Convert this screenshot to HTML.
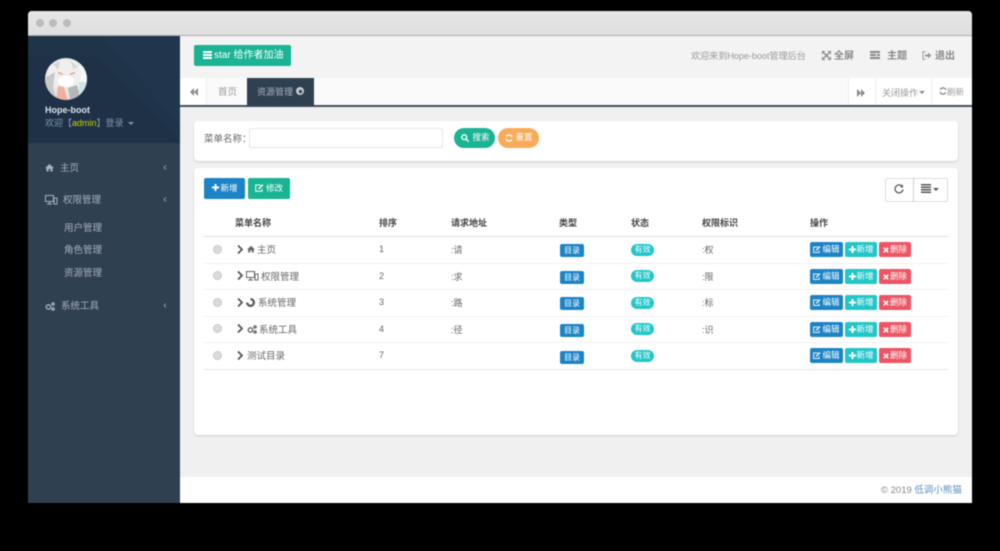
<!DOCTYPE html>
<html lang="zh"><head><meta charset="utf-8"><title>Hope-boot</title>
<style>
html,body{margin:0;padding:0;background:#000;width:1000px;height:551px;overflow:hidden}
body{font-family:"Liberation Sans","Noto Sans CJK SC",sans-serif;font-size:9px;color:#676a6c}
#w{position:absolute;left:0;top:0;width:1000px;height:551px;filter:blur(.45px)}
.a{position:absolute;white-space:nowrap}
.b{position:absolute;color:#fff;border-radius:2px;text-align:center;white-space:nowrap}
svg{position:absolute;overflow:visible}
.nav{color:#a7b1c2;font-size:9.5px;margin-top:1px}
.th{font-weight:bold;color:#444;font-size:9px;top:217px;line-height:13px}
.td{color:#666;font-size:9px;line-height:13px;margin-top:1px}
.n{color:#666;font-size:9px;line-height:13px}
.ln{position:absolute;left:204px;width:744px;height:1px;background:#eef0f1}
.rad{position:absolute;left:213px;width:9px;height:9px;border-radius:50%;background:#dcdcdc;border:1px solid #c8c8c8;box-sizing:border-box}
</style></head><body><div id="w">
<div class="a" style="left:28px;top:11px;width:944px;height:492px;background:#f0f0f0;border-radius:4px 4px 0 0;overflow:hidden">
<div class="a" style="left:0;top:0;width:944px;height:25px;background:linear-gradient(#e6e6e6,#dfdfdf);border-bottom:1px solid #a9adb0;box-sizing:border-box"></div>
<div class="a" style="left:8px;top:8px;width:8px;height:8px;border-radius:50%;background:#bcbcbc"></div>
<div class="a" style="left:21px;top:8px;width:8px;height:8px;border-radius:50%;background:#bcbcbc"></div>
<div class="a" style="left:35px;top:8px;width:8px;height:8px;border-radius:50%;background:#bcbcbc"></div>
</div>

<!-- sidebar -->
<div class="a" style="left:28px;top:36px;width:152px;height:467px;background:#2f4050"></div>
<div class="a" style="left:28px;top:36px;width:152px;height:107px;background:#1f3349"></div>
<svg style="left:28px;top:36px" width="152" height="107"><polygon points="75,0 152,0 152,90" fill="#233a50" opacity=".5"/><polygon points="0,20 70,20 152,107 0,107" fill="#1d3046" opacity=".4"/></svg>
<svg style="left:45px;top:58px" width="42" height="42" viewBox="0 0 42 42">
<defs><clipPath id="c"><circle cx="21" cy="21" r="21"/></clipPath></defs>
<g clip-path="url(#c)"><rect width="42" height="42" fill="#e4e8e8"/>
<rect x="28" y="8" width="14" height="24" fill="#f5f8f9"/>
<path d="M4 8 L14 2 L30 3 L37 14 L33 30 L10 30 L3 22Z" fill="#efefee"/>
<path d="M8 6L15 3L13 12ZM26 3L33 9L28 11Z" fill="#d6d6d6"/>
<path d="M0 20 L10 14 L8 30 L12 42 L0 42Z" fill="#c6c9c8"/>
<path d="M13 28 L19 29 L23 42 L11 42Z" fill="#f2b09c"/>
<path d="M23 30 L32 27 L36 42 L25 42Z" fill="#b2b7b8"/>
<rect x="34" y="24" width="8" height="18" fill="#d3e2e6"/>
<path d="M13 14.5 L18 16.5 M25 16.5 L30 14.5" stroke="#f2977c" stroke-width="1.3"/>
<ellipse cx="21" cy="23" rx="8" ry="5.5" fill="#fff"/></g></svg>
<div class="a" style="left:45px;top:104px;color:#dfe4ed;font-weight:bold;font-size:9px;line-height:13px">Hope-boot</div>
<div class="a" style="left:45px;top:117px;color:#8095a8;font-size:9px;line-height:13px">欢迎【<span style="color:#c8d400">admin</span>】登录 <span style="display:inline-block;border:3px solid transparent;border-top-color:#8095a8;border-bottom:0;vertical-align:middle;margin-left:2px"></span></div>

<svg style="left:45px;top:163px" width="9" height="9" viewBox="0 0 9 9"><path d="M4.5 1 L9 5 H7.6 V8.5 H5.4 V6 H3.6 V8.5 H1.4 V5 H0Z" fill="#a7b1c2"/></svg>
<div class="a nav" style="left:60px;top:161px;line-height:13px">主页</div>
<svg style="left:45px;top:195px" width="12" height="10" viewBox="0 0 12 10" fill="none" stroke="#a7b1c2"><rect x=".5" y=".5" width="8" height="6"/><path d="M2 9H7M4.5 7V9M10 3H12V9H9V3Z"/></svg>
<div class="a nav" style="left:63px;top:193px;line-height:13px">权限管理</div>
<div class="a nav" style="left:64px;top:221px;line-height:13px">用户管理</div>
<div class="a nav" style="left:64px;top:243px;line-height:13px">角色管理</div>
<div class="a nav" style="left:64px;top:266px;line-height:13px">资源管理</div>
<svg style="left:45px;top:302px" width="10" height="9" viewBox="0 0 10 9" fill="none" stroke="#a7b1c2" stroke-width="1.4"><circle cx="3.4" cy="5" r="2.2"/><circle cx="8" cy="2" r="1.1"/><circle cx="8" cy="7" r="1.1"/></svg>
<div class="a nav" style="left:61px;top:299px;line-height:13px">系统工具</div>
<svg style="left:163px;top:165px" width="4" height="5" fill="none" stroke="#8d99aa" stroke-width=".9"><path d="M3 .5L1 2.5L3 4.5"/></svg>
<svg style="left:163px;top:197px" width="4" height="5" fill="none" stroke="#8d99aa" stroke-width=".9"><path d="M3 .5L1 2.5L3 4.5"/></svg>
<svg style="left:163px;top:303px" width="4" height="5" fill="none" stroke="#8d99aa" stroke-width=".9"><path d="M3 .5L1 2.5L3 4.5"/></svg>

<!-- topbar -->
<div class="a" style="left:180px;top:36px;width:792px;height:42px;background:#f3f3f4"></div>
<div class="b" style="left:194px;top:45px;width:97px;height:21px;background:#1ab394;border-radius:2px"></div>
<svg style="left:203px;top:51px" width="9" height="8"><path d="M0 0H9V2H0ZM0 3H9V5H0ZM0 6H9V8H0Z" fill="#fff"/></svg>
<div class="a" style="left:214px;top:49px;color:#fff;font-size:10px;line-height:14px">star 给作者加油</div>
<div class="a" style="left:691px;top:50px;color:#999;font-size:9.2px;line-height:13px;letter-spacing:-.1px">欢迎来到Hope-boot管理后台</div>
<svg style="left:822px;top:51px" width="9" height="9" viewBox="0 0 9 9"><path d="M2 2L7 7M7 2L2 7" fill="none" stroke="#888" stroke-width="1.4"/><path d="M0 0H3.5L0 3.5ZM9 0V3.5L5.5 0ZM0 9V5.5L3.5 9ZM9 9H5.5L9 5.5Z" fill="#888"/></svg>
<div class="a" style="left:834px;top:50px;color:#888;font-weight:bold;font-size:10px;line-height:14px">全屏</div>
<svg style="left:870px;top:51px" width="10" height="8" viewBox="0 0 10 8"><path d="M0 0H10V2H0ZM0 3H6V5H0ZM7 3H10V5H7ZM0 6H10V8H0Z" fill="#888"/></svg>
<div class="a" style="left:887px;top:50px;color:#888;font-weight:bold;font-size:10px;line-height:14px">主题</div>
<svg style="left:922px;top:51px" width="10" height="9" viewBox="0 0 10 9" fill="none" stroke="#999"><path d="M3.5 .7H1V8.3H3.5"/><path d="M3 3.5H6V1.5L9.5 4.5L6 7.5V5.5H3Z" fill="#999" stroke="none"/></svg>
<div class="a" style="left:935px;top:50px;color:#888;font-weight:bold;font-size:10px;line-height:14px">退出</div>

<!-- tabs -->
<div class="a" style="left:180px;top:78px;width:792px;height:27px;background:#fafafa"></div>
<div class="a" style="left:180px;top:105px;width:792px;height:2px;background:#42505e"></div>
<div class="a" style="left:180px;top:78px;width:27px;height:27px;background:#fff;border-right:1px solid #eee;box-sizing:border-box"></div>
<svg style="left:190px;top:88px" width="8" height="8" viewBox="0 0 8 8"><path d="M4 0V8L0 4ZM8 0V8L4 4Z" fill="#8a8a8a"/></svg>
<div class="a" style="left:218px;top:86px;color:#999;font-size:9.5px;line-height:13px">首页</div>
<div class="a" style="left:247px;top:78px;width:67px;height:28px;background:#2f4050"></div>
<div class="a" style="left:257px;top:86px;color:#a7b1c2;font-size:9px;line-height:13px">资源管理</div>
<div class="a" style="left:296px;top:87px;width:8px;height:8px;border-radius:50%;background:#c3cad3"></div>
<div class="a" style="left:298.5px;top:89.5px;width:3px;height:3px;background:#2f4050"></div>
<div class="a" style="left:848px;top:78px;width:124px;height:27px;background:#fff"></div>
<div class="a" style="left:848px;top:78px;width:1px;height:27px;background:#eee"></div>
<div class="a" style="left:875px;top:78px;width:1px;height:27px;background:#eee"></div>
<div class="a" style="left:931px;top:78px;width:1px;height:27px;background:#eee"></div>
<svg style="left:857px;top:89px" width="8" height="8" viewBox="0 0 8 8"><path d="M0 0V8L4 4ZM4 0V8L8 4Z" fill="#8a8a8a"/></svg>
<div class="a" style="left:882px;top:87px;color:#999;font-size:9px;line-height:13px">关闭操作</div>
<div class="a" style="left:919px;top:91px;border:3px solid transparent;border-top-color:#888;border-bottom:0"></div>
<svg style="left:939px;top:87px" width="8" height="8" viewBox="0 0 8 8" fill="none" stroke="#888" stroke-width="1.3"><path d="M7 3A3.2 3.2 0 0 0 1.2 2.6M1 5A3.2 3.2 0 0 0 6.8 5.4"/></svg>
<div class="a" style="left:947px;top:86px;color:#999;font-size:8.5px;line-height:13px">刷新</div>

<!-- search card -->
<div class="a" style="left:194px;top:121px;width:764px;height:40px;background:#fff;border-radius:4px;box-shadow:0 1px 2px rgba(0,0,0,.15)"></div>
<div class="a" style="left:204px;top:133px;font-size:9.5px;color:#666;line-height:14px">菜单名称：</div>
<div class="a" style="left:249px;top:128px;width:194px;height:20px;background:#fff;border:1px solid #e5e6e7;border-radius:2px;box-sizing:border-box"></div>
<div class="b" style="left:454px;top:128px;width:41px;height:20px;background:#1ab394;border-radius:10px;font-size:8.5px;line-height:19px;text-indent:13px">搜索</div>
<svg style="left:461px;top:134px" width="8" height="8" viewBox="0 0 8 8" fill="none" stroke="#fff" stroke-width="1.4"><circle cx="3.2" cy="3.2" r="2.4"/><path d="M5 5L7.6 7.6"/></svg>
<div class="b" style="left:498px;top:128px;width:41px;height:20px;background:#f8ac59;border-radius:10px;font-size:8.5px;line-height:19px;text-indent:11px">重置</div>
<svg style="left:505px;top:134px" width="8" height="8" viewBox="0 0 8 8" fill="none" stroke="#fff" stroke-width="1.4"><path d="M7 3A3.2 3.2 0 0 0 1.2 2.6M1 5A3.2 3.2 0 0 0 6.8 5.4"/></svg>

<!-- table card -->
<div class="a" style="left:194px;top:168px;width:764px;height:267px;background:#fff;border-radius:4px;box-shadow:0 1px 2px rgba(0,0,0,.15)"></div>
<div class="b" style="left:204px;top:178px;width:41px;height:21px;background:#1c84c6;font-size:8.5px;line-height:20px;text-indent:9px;border-radius:2px">新增</div>
<svg style="left:212px;top:184px" width="7" height="7"><path d="M2.5 0H4.5V2.5H7V4.5H4.5V7H2.5V4.5H0V2.5H2.5Z" fill="#fff"/></svg>
<div class="b" style="left:248px;top:178px;width:42px;height:21px;background:#1ab394;font-size:8.5px;line-height:20px;text-indent:11px;border-radius:2px">修改</div>
<svg style="left:255px;top:184px" width="9" height="8" viewBox="0 0 9 8" fill="none" stroke="#fff"><path d="M6 1H.7V7.3H7V5"/><path d="M3.5 5L8 .7" stroke-width="1.4"/></svg>
<div class="a" style="left:885px;top:178px;width:63px;height:24px;border:1px solid #ddd;border-radius:2px;box-sizing:border-box;background:#fff"></div>
<div class="a" style="left:913px;top:178px;width:1px;height:24px;background:#cfcfcf"></div>
<svg style="left:894px;top:184px" width="10" height="10" viewBox="0 0 10 10" fill="none" stroke="#555" stroke-width="1.2"><path d="M8.6 3A4 4 0 1 0 9 5.5"/><path d="M9 .5V3.5H6" fill="#555" stroke="none"/></svg>
<svg style="left:921px;top:184px" width="10" height="9" viewBox="0 0 10 9"><path d="M0 0H10V1.5H0ZM0 2.5H10V4H0ZM0 5H10V6.5H0ZM0 7.5H10V9H0Z" fill="#555"/></svg>
<div class="a" style="left:933px;top:188px;border:3px solid transparent;border-top-color:#555;border-bottom:0"></div>

<div class="a th" style="left:235px">菜单名称</div>
<div class="a th" style="left:379px">排序</div>
<div class="a th" style="left:451px">请求地址</div>
<div class="a th" style="left:559px">类型</div>
<div class="a th" style="left:631px">状态</div>
<div class="a th" style="left:702px">权限标识</div>
<div class="a th" style="left:810px">操作</div>
<div class="ln" style="top:236px;background:#dfe1e3"></div>
<div class="ln" style="top:263px"></div><div class="ln" style="top:289px"></div><div class="ln" style="top:316px"></div><div class="ln" style="top:342px"></div><div class="ln" style="top:369px;background:#e3e5e6"></div>

<!-- row 1 -->
<div class="rad" style="top:245px"></div>
<svg style="left:237px;top:245px" width="7" height="9"><path d="M1 .5L5 4.5L1 8.5" fill="none" stroke="#555" stroke-width="1.8"/></svg>
<svg style="left:247px;top:245px" width="8" height="8" viewBox="0 0 9 9"><path d="M4.5 1 L9 5 H7.6 V8.5 H5.4 V6 H3.6 V8.5 H1.4 V5 H0Z" fill="#666"/></svg>
<div class="a td" style="left:257px;top:243px;font-size:9.5px">主页</div>
<div class="a n" style="left:379px;top:243px">1</div><div class="a td" style="left:451px;top:243px">:请</div>
<div class="a td" style="left:702px;top:243px">:权</div>
<!-- row 2 -->
<div class="rad" style="top:271px"></div>
<svg style="left:237px;top:271px" width="7" height="9"><path d="M1 .5L5 4.5L1 8.5" fill="none" stroke="#555" stroke-width="1.8"/></svg>
<svg style="left:246px;top:271px" width="12" height="10" viewBox="0 0 12 10" fill="none" stroke="#666"><rect x=".5" y=".5" width="8" height="6"/><path d="M2 9H7M4.5 7V9M10 3H12V9H9V3Z"/></svg>
<div class="a td" style="left:261px;top:270px;font-size:9.5px">权限管理</div>
<div class="a n" style="left:379px;top:270px">2</div><div class="a td" style="left:451px;top:270px">:求</div>
<div class="a td" style="left:702px;top:270px">:限</div>
<!-- row 3 -->
<div class="rad" style="top:298px"></div>
<svg style="left:237px;top:298px" width="7" height="9"><path d="M1 .5L5 4.5L1 8.5" fill="none" stroke="#555" stroke-width="1.8"/></svg>
<svg style="left:246px;top:298px" width="9" height="9" viewBox="0 0 9 9"><path d="M4.5 0A4.5 4.5 0 1 1 0 4.5H2.2A2.3 2.3 0 1 0 4.5 2.2Z" fill="#555"/></svg>
<div class="a td" style="left:258px;top:296px;font-size:9.5px">系统管理</div>
<div class="a n" style="left:379px;top:296px">3</div><div class="a td" style="left:451px;top:296px">:路</div>
<div class="a td" style="left:702px;top:296px">:标</div>
<!-- row 4 -->
<div class="rad" style="top:324px"></div>
<svg style="left:237px;top:324px" width="7" height="9"><path d="M1 .5L5 4.5L1 8.5" fill="none" stroke="#555" stroke-width="1.8"/></svg>
<svg style="left:247px;top:325px" width="10" height="9" viewBox="0 0 10 9" fill="none" stroke="#666" stroke-width="1.4"><circle cx="3.4" cy="5" r="2.2"/><circle cx="8" cy="2" r="1.1"/><circle cx="8" cy="7" r="1.1"/></svg>
<div class="a td" style="left:259px;top:323px;font-size:9.5px">系统工具</div>
<div class="a n" style="left:379px;top:323px">4</div><div class="a td" style="left:451px;top:323px">:径</div>
<div class="a td" style="left:702px;top:323px">:识</div>
<!-- row 5 -->
<div class="rad" style="top:351px"></div>
<svg style="left:237px;top:351px" width="7" height="9"><path d="M1 .5L5 4.5L1 8.5" fill="none" stroke="#555" stroke-width="1.8"/></svg>
<div class="a td" style="left:247px;top:349px;font-size:9.5px">测试目录</div>
<div class="a n" style="left:379px;top:349px">7</div>

<!-- badges -->
<div class="b" style="left:560px;top:244px;width:24px;height:13px;background:#1c84c6;font-size:8px;line-height:13px">目录</div>
<div class="b" style="left:560px;top:271px;width:24px;height:13px;background:#1c84c6;font-size:8px;line-height:13px">目录</div>
<div class="b" style="left:560px;top:297px;width:24px;height:13px;background:#1c84c6;font-size:8px;line-height:13px">目录</div>
<div class="b" style="left:560px;top:324px;width:24px;height:13px;background:#1c84c6;font-size:8px;line-height:13px">目录</div>
<div class="b" style="left:560px;top:351px;width:24px;height:13px;background:#1c84c6;font-size:8px;line-height:13px">目录</div>
<div class="b" style="left:631px;top:244px;width:23px;height:12px;background:#23c6c8;font-size:8px;line-height:12px;border-radius:6px">有效</div>
<div class="b" style="left:631px;top:270px;width:23px;height:12px;background:#23c6c8;font-size:8px;line-height:12px;border-radius:6px">有效</div>
<div class="b" style="left:631px;top:297px;width:23px;height:12px;background:#23c6c8;font-size:8px;line-height:12px;border-radius:6px">有效</div>
<div class="b" style="left:631px;top:323px;width:23px;height:12px;background:#23c6c8;font-size:8px;line-height:12px;border-radius:6px">有效</div>
<div class="b" style="left:631px;top:350px;width:23px;height:12px;background:#23c6c8;font-size:8px;line-height:12px;border-radius:6px">有效</div>

<!-- action buttons -->
<div class="b" style="left:810px;top:242px;width:33px;height:15px;background:#1c84c6;font-size:8.5px;line-height:15px;text-indent:9px">编辑</div>
<div class="b" style="left:845px;top:242px;width:32px;height:15px;background:#23c6c8;font-size:8.5px;line-height:15px;text-indent:8px">新增</div>
<div class="b" style="left:879px;top:242px;width:32px;height:15px;background:#ed5565;font-size:8.5px;line-height:15px;text-indent:7px">删除</div>
<svg style="left:813px;top:246px" width="8" height="7" viewBox="0 0 9 8" fill="none" stroke="#fff"><path d="M6 1H.7V7.3H7V5"/><path d="M3.5 5L8 .7" stroke-width="1.4"/></svg>
<svg style="left:849px;top:246px" width="7" height="7"><path d="M2.5 0H4.5V2.5H7V4.5H4.5V7H2.5V4.5H0V2.5H2.5Z" fill="#fff"/></svg>
<svg style="left:883px;top:247px" width="6" height="6"><path d="M.8 .8L5.2 5.2M5.2 .8L.8 5.2" stroke="#fff" stroke-width="1.5"/></svg>

<div class="b" style="left:810px;top:269px;width:33px;height:15px;background:#1c84c6;font-size:8.5px;line-height:15px;text-indent:9px">编辑</div>
<div class="b" style="left:845px;top:269px;width:32px;height:15px;background:#23c6c8;font-size:8.5px;line-height:15px;text-indent:8px">新增</div>
<div class="b" style="left:879px;top:269px;width:32px;height:15px;background:#ed5565;font-size:8.5px;line-height:15px;text-indent:7px">删除</div>
<svg style="left:813px;top:273px" width="8" height="7" viewBox="0 0 9 8" fill="none" stroke="#fff"><path d="M6 1H.7V7.3H7V5"/><path d="M3.5 5L8 .7" stroke-width="1.4"/></svg>
<svg style="left:849px;top:273px" width="7" height="7"><path d="M2.5 0H4.5V2.5H7V4.5H4.5V7H2.5V4.5H0V2.5H2.5Z" fill="#fff"/></svg>
<svg style="left:883px;top:274px" width="6" height="6"><path d="M.8 .8L5.2 5.2M5.2 .8L.8 5.2" stroke="#fff" stroke-width="1.5"/></svg>

<div class="b" style="left:810px;top:295px;width:33px;height:15px;background:#1c84c6;font-size:8.5px;line-height:15px;text-indent:9px">编辑</div>
<div class="b" style="left:845px;top:295px;width:32px;height:15px;background:#23c6c8;font-size:8.5px;line-height:15px;text-indent:8px">新增</div>
<div class="b" style="left:879px;top:295px;width:32px;height:15px;background:#ed5565;font-size:8.5px;line-height:15px;text-indent:7px">删除</div>
<svg style="left:813px;top:299px" width="8" height="7" viewBox="0 0 9 8" fill="none" stroke="#fff"><path d="M6 1H.7V7.3H7V5"/><path d="M3.5 5L8 .7" stroke-width="1.4"/></svg>
<svg style="left:849px;top:299px" width="7" height="7"><path d="M2.5 0H4.5V2.5H7V4.5H4.5V7H2.5V4.5H0V2.5H2.5Z" fill="#fff"/></svg>
<svg style="left:883px;top:300px" width="6" height="6"><path d="M.8 .8L5.2 5.2M5.2 .8L.8 5.2" stroke="#fff" stroke-width="1.5"/></svg>

<div class="b" style="left:810px;top:322px;width:33px;height:15px;background:#1c84c6;font-size:8.5px;line-height:15px;text-indent:9px">编辑</div>
<div class="b" style="left:845px;top:322px;width:32px;height:15px;background:#23c6c8;font-size:8.5px;line-height:15px;text-indent:8px">新增</div>
<div class="b" style="left:879px;top:322px;width:32px;height:15px;background:#ed5565;font-size:8.5px;line-height:15px;text-indent:7px">删除</div>
<svg style="left:813px;top:326px" width="8" height="7" viewBox="0 0 9 8" fill="none" stroke="#fff"><path d="M6 1H.7V7.3H7V5"/><path d="M3.5 5L8 .7" stroke-width="1.4"/></svg>
<svg style="left:849px;top:326px" width="7" height="7"><path d="M2.5 0H4.5V2.5H7V4.5H4.5V7H2.5V4.5H0V2.5H2.5Z" fill="#fff"/></svg>
<svg style="left:883px;top:327px" width="6" height="6"><path d="M.8 .8L5.2 5.2M5.2 .8L.8 5.2" stroke="#fff" stroke-width="1.5"/></svg>

<div class="b" style="left:810px;top:348px;width:33px;height:15px;background:#1c84c6;font-size:8.5px;line-height:15px;text-indent:9px">编辑</div>
<div class="b" style="left:845px;top:348px;width:32px;height:15px;background:#23c6c8;font-size:8.5px;line-height:15px;text-indent:8px">新增</div>
<div class="b" style="left:879px;top:348px;width:32px;height:15px;background:#ed5565;font-size:8.5px;line-height:15px;text-indent:7px">删除</div>
<svg style="left:813px;top:352px" width="8" height="7" viewBox="0 0 9 8" fill="none" stroke="#fff"><path d="M6 1H.7V7.3H7V5"/><path d="M3.5 5L8 .7" stroke-width="1.4"/></svg>
<svg style="left:849px;top:352px" width="7" height="7"><path d="M2.5 0H4.5V2.5H7V4.5H4.5V7H2.5V4.5H0V2.5H2.5Z" fill="#fff"/></svg>
<svg style="left:883px;top:353px" width="6" height="6"><path d="M.8 .8L5.2 5.2M5.2 .8L.8 5.2" stroke="#fff" stroke-width="1.5"/></svg>

<!-- footer -->
<div class="a" style="left:180px;top:477px;width:792px;height:26px;background:#fff"></div>
<div class="a" style="left:881px;top:484px;font-size:9.5px;line-height:14px;color:#888">© 2019 <span style="color:#5f93c5">低调小熊猫</span></div>
</div></body></html>
